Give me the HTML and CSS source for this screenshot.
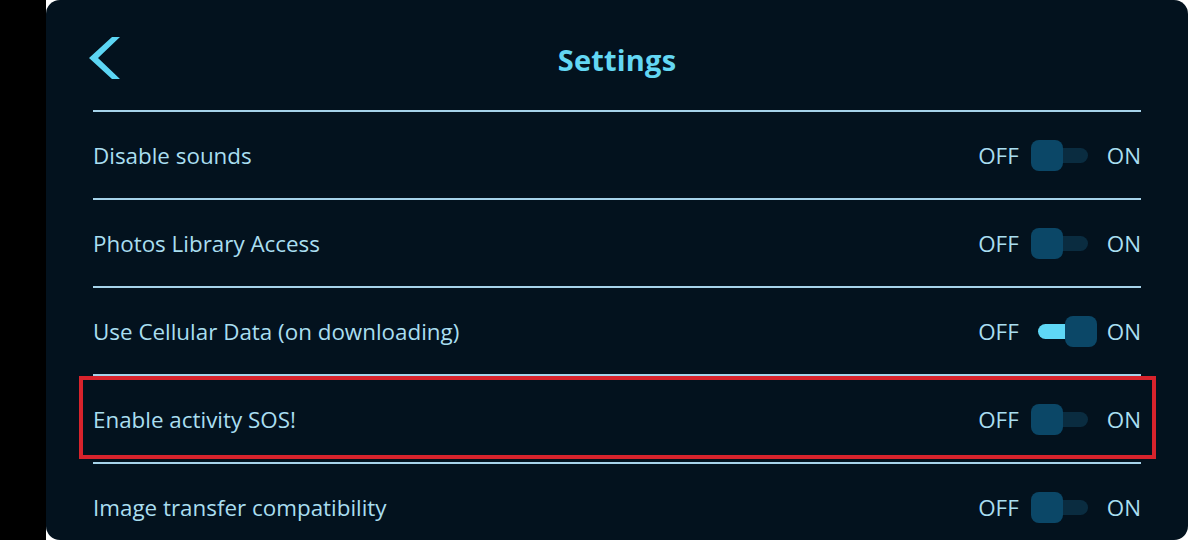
FILE: index.html
```html
<!DOCTYPE html>
<html lang="en">
<head>
<meta charset="utf-8">
<title>Settings</title>
<link rel="stylesheet" href="styles.css">
</head>
<body>
<div class="screen">
  <div class="side"></div>
  <main class="panel">
    <header class="header">
      <button class="back" aria-label="Back">
        <svg width="33" height="44" viewBox="0 0 33 44"><polygon points="24,1 32,1 10,22 32,43 24,43 1,22" fill="#5cd6f4"/></svg>
      </button>
      <h1 class="title">Settings</h1>
    </header>
    <ul class="list">
      <li class="row">
        <span class="label">Disable sounds</span>
        <div class="switch"><span class="state">OFF</span><span class="toggle"><span class="track"></span><span class="knob"></span></span><span class="state">ON</span></div>
      </li>
      <li class="row">
        <span class="label">Photos Library Access</span>
        <div class="switch"><span class="state">OFF</span><span class="toggle"><span class="track"></span><span class="knob"></span></span><span class="state">ON</span></div>
      </li>
      <li class="row">
        <span class="label">Use Cellular Data (on downloading)</span>
        <div class="switch"><span class="state">OFF</span><span class="toggle on"><span class="track"></span><span class="knob"></span></span><span class="state">ON</span></div>
      </li>
      <li class="row highlighted">
        <span class="label">Enable activity SOS!</span>
        <div class="switch"><span class="state">OFF</span><span class="toggle"><span class="track"></span><span class="knob"></span></span><span class="state">ON</span></div>
        <span class="marker"></span>
      </li>
      <li class="row">
        <span class="label">Image transfer compatibility</span>
        <div class="switch"><span class="state">OFF</span><span class="toggle"><span class="track"></span><span class="knob"></span></span><span class="state">ON</span></div>
      </li>
    </ul>
  </main>
</div>
</body>
</html>
```

FILE: styles.css
```css
html, body {
  margin: 0;
  padding: 0;
  background: #ffffff;
}
body {
  width: 1188px;
  height: 540px;
  overflow: hidden;
  font-family: "Open Sans", "Noto Sans", sans-serif;
}
.screen {
  display: flex;
  height: 540px;
}
.side {
  width: 46px;
  flex: none;
  background: #000000;
}
.panel {
  flex: 1;
  background: #03121e;
  border-radius: 14px;
  overflow: hidden;
  display: flex;
  flex-direction: column;
}
.header {
  height: 110px;
  flex: none;
  position: relative;
  display: flex;
  align-items: center;
  justify-content: center;
}
.back {
  position: absolute;
  left: 42px;
  top: 36px;
  padding: 0;
  margin: 0;
  border: 0;
  background: none;
  width: 33px;
  height: 44px;
}
.back svg { display: block; }
.title {
  margin: 0;
  padding-top: 9px;
  font-size: 29px;
  font-weight: 700;
  color: #63d7f3;
  letter-spacing: 0.2px;
}
.list {
  list-style: none;
  margin: 0;
  padding: 0 47px;
}
.row {
  position: relative;
  height: 86px;
  border-top: 2px solid #a6d3ea;
  display: flex;
  align-items: center;
  justify-content: space-between;
}
.label {
  font-size: 22.4px;
  color: #a9def0;
  padding-top: 0;
}
.switch {
  display: flex;
  align-items: center;
}
.state {
  font-size: 22.4px;
  color: #a9def0;
}
.toggle {
  position: relative;
  width: 66px;
  height: 31px;
  margin: 0 10px 0 12px;
}
.track {
  position: absolute;
  left: 7px;
  top: 8px;
  width: 50px;
  height: 15px;
  border-radius: 8px;
  background: #0a2c40;
}
.knob {
  position: absolute;
  left: 0;
  top: 0;
  width: 32px;
  height: 31px;
  border-radius: 8px;
  background: #0b4767;
}
.toggle.on .track { background: #5fd8f6; }
.toggle.on .knob { left: 34px; }
.marker {
  position: absolute;
  left: -14px;
  right: -15px;
  top: 0;
  bottom: 3px;
  border: 4px solid #d8232c;
  pointer-events: none;
}
```
